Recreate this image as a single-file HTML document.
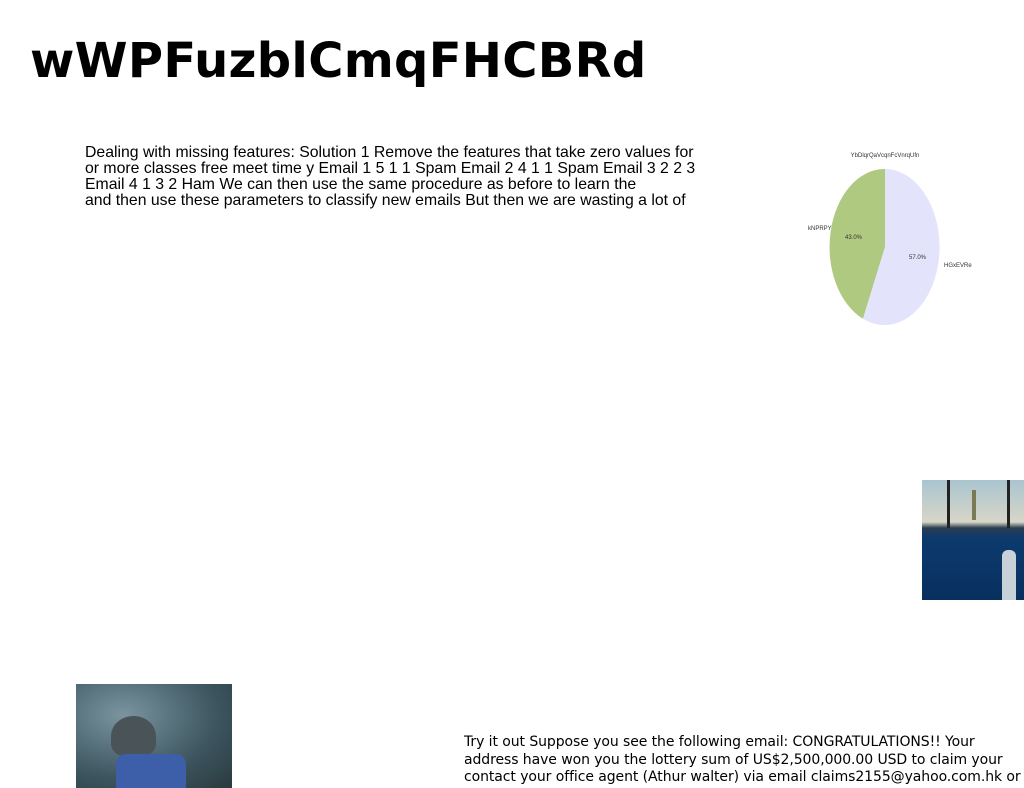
<!DOCTYPE html>
<html><head><style>
body{margin:0;width:1024px;height:788px;background:#fff;position:relative;overflow:hidden;font-family:"Liberation Sans",sans-serif}
h1{position:absolute;left:30px;top:33px;margin:0;font-family:"DejaVu Sans",sans-serif;font-weight:bold;font-size:48px;letter-spacing:0.3px;color:#000}
.p{position:absolute;left:85px;top:145px;font-family:"Liberation Sans",Arial,sans-serif;font-size:15.8px;line-height:16px;color:#000;white-space:nowrap;letter-spacing:0px}
.b{position:absolute;left:464px;top:734px;font-family:"DejaVu Sans",sans-serif;font-size:14px;line-height:17.5px;color:#000;white-space:nowrap;letter-spacing:-0.08px}
</style></head><body>
<h1>wWPFuzblCmqFHCBRd</h1>
<div class="p">Dealing with missing features: Solution 1 Remove the features that take zero values for<br>or more classes free meet time y Email 1 5 1 1 Spam Email 2 4 1 1 Spam Email 3 2 2 3<br>Email 4 1 3 2 Ham We can then use the same procedure as before to learn the<br>and then use these parameters to classify new emails But then we are wasting a lot of</div>
<svg style="position:absolute;left:800px;top:140px" width="224" height="200">
<text x="85" y="17" font-size="6" text-anchor="middle" font-family="Liberation Sans" fill="#333">YbDlqrQaVcqnFcVnrqUfn</text>
<g transform="translate(85,107) scale(55,78)">
<path d="M0,0 L0,-1 A1,1 0 0 0 -0.4,0.92 Z" fill="#b0c980"/>
<path d="M0,0 L0,-1 A1,1 0 1 1 -0.4,0.92 Z" fill="#e3e3fb"/>
</g>
<text x="45" y="99" font-size="6" font-family="Liberation Sans" fill="#333">43.0%</text>
<text x="109" y="119" font-size="6" font-family="Liberation Sans" fill="#333">57.0%</text>
<text x="8" y="90" font-size="6" font-family="Liberation Sans" fill="#333">kNPRPY</text>
<text x="144" y="127" font-size="6" font-family="Liberation Sans" fill="#333">HGxEVRe</text>
</svg>
<div style="position:absolute;left:922px;top:480px;width:102px;height:120px;background:linear-gradient(#a9c4cf 0,#d8d6c8 35%,#2a3d4f 40%,#0c3a6e 48%,#08305e 100%)">
<div style="position:absolute;left:25px;top:0;width:3px;height:48px;background:#222"></div>
<div style="position:absolute;left:85px;top:0;width:3px;height:48px;background:#222"></div>
<div style="position:absolute;left:50px;top:10px;width:4px;height:30px;background:#7a7a55"></div>
<div style="position:absolute;left:80px;top:70px;width:14px;height:50px;background:#c8d0d8;border-radius:6px 6px 0 0"></div>
</div>
<div style="position:absolute;left:76px;top:684px;width:156px;height:104px;background:radial-gradient(ellipse at 30% 30%,#7a95a0,#3d5660 60%,#2a3a3e)">
<div style="position:absolute;left:35px;top:32px;width:45px;height:40px;background:#4a5458;border-radius:50% 50% 30% 30%"></div>
<div style="position:absolute;left:40px;top:70px;width:70px;height:34px;background:#3d5ea8;border-radius:10px 10px 0 0"></div>
</div>
<div class="b">Try it out Suppose you see the following email: CONGRATULATIONS!! Your<br>address have won you the lottery sum of US$2,500,000.00 USD to claim your<br>contact your office agent (Athur walter) via email claims2155@yahoo.com.hk or</div>
</body></html>
